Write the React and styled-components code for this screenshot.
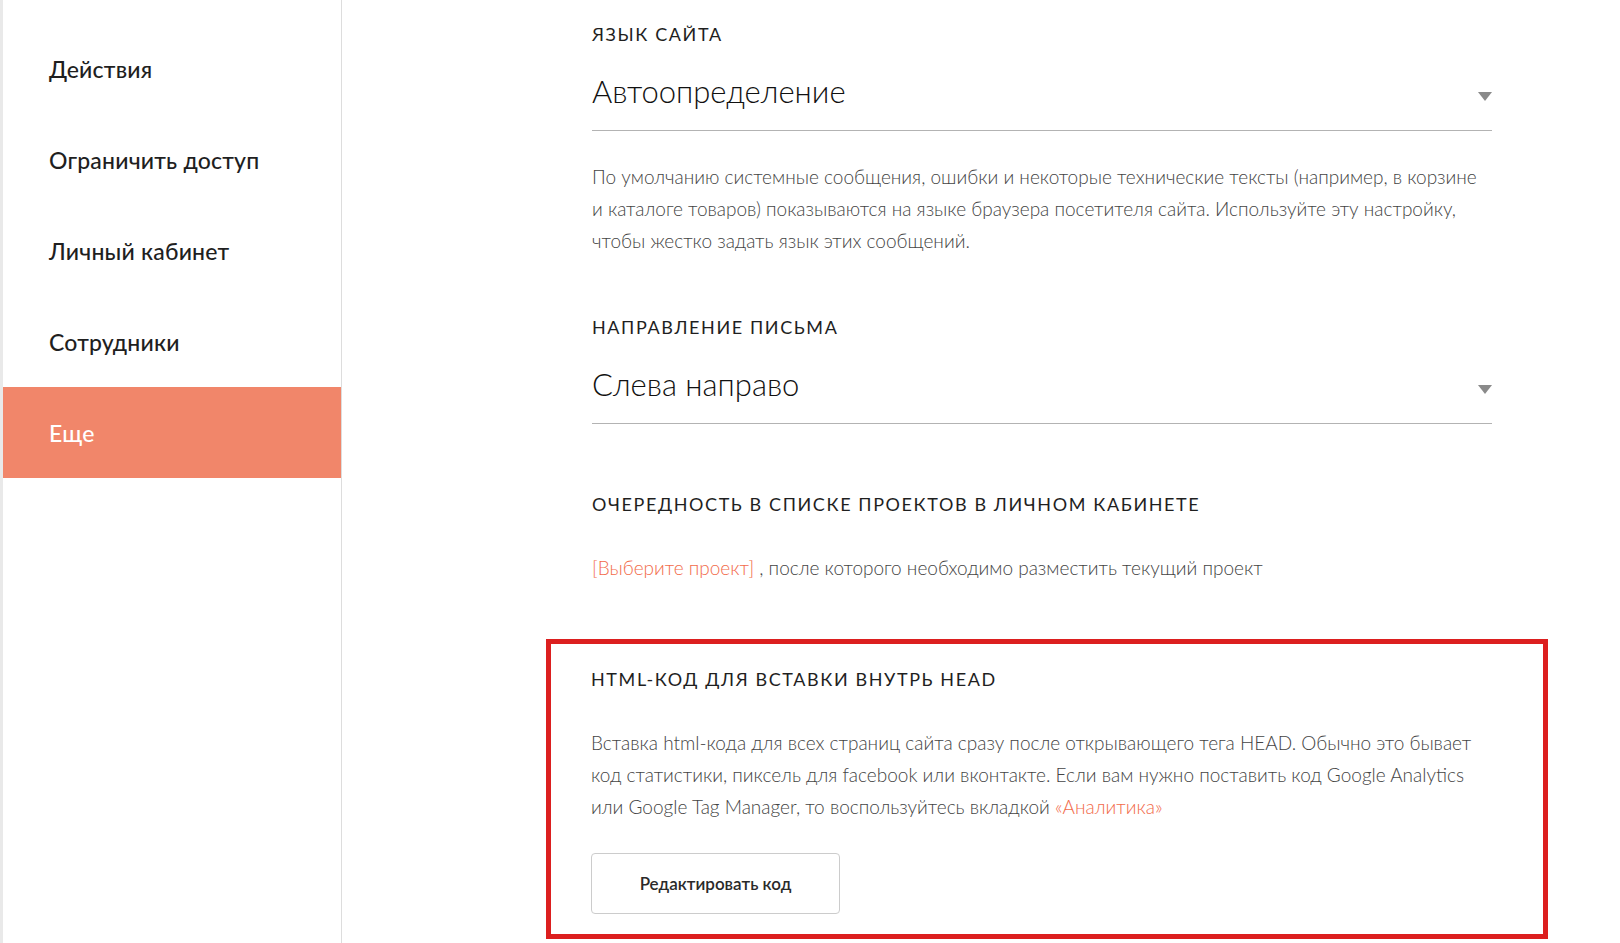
import React from 'react';
import styled, { createGlobalStyle } from 'styled-components';

const GlobalStyle = createGlobalStyle`
  html, body {
    margin: 0;
    padding: 0;
    background: #ffffff;
  }
  body {
    font-family: Lato, "Noto Sans", sans-serif;
    color: #222222;
  }
`;

const Page = styled.div`
  display: flex;
  min-height: 943px;
`;

const Sidebar = styled.nav`
  width: 338px;
  flex-shrink: 0;
  border-left: 3px solid #e9e9e9;
  border-right: 1px solid #dddddd;
  padding-top: 23px;
  box-sizing: content-box;
`;

const MenuItem = styled.div`
  height: 91px;
  display: flex;
  align-items: center;
  padding-left: 46px;
  font-size: 23px;
  font-weight: 500;
  letter-spacing: 0.2px;
  color: ${p => (p.$active ? '#ffffff' : '#1f1f1f')};
  background: ${p => (p.$active ? '#f1866a' : 'transparent')};
`;

const Main = styled.main`
  flex: 1;
  padding: 22px 0 0 250px;
`;

const Content = styled.div`
  width: 900px;
`;

const Label = styled.div`
  font-size: 18px;
  letter-spacing: 1.6px;
  text-transform: uppercase;
  color: #1f1f1f;
  line-height: 24px;
`;

const Select = styled.div`
  display: flex;
  align-items: center;
  justify-content: space-between;
  height: 70px;
  margin-top: 10px;
  border-bottom: 1px solid #b3b3b3;
  font-size: 31px;
  font-weight: 300;
  color: #111111;
  padding-bottom: 4px;
`;

const Arrow = styled.span`
  width: 0;
  height: 0;
  border-left: 7px solid transparent;
  border-right: 7px solid transparent;
  border-top: 9px solid #8a8a8a;
  margin-top: 10px;
`;

const Text = styled.p`
  margin: ${p => p.$margin || '0'};
  font-size: 19px;
  line-height: 32px;
  font-weight: 300;
  color: #444444;
`;

const Link = styled.span`
  color: #f26b4b;
`;

const Block = styled.section`
  margin-top: ${p => p.$top || '0'};
`;

const Highlight = styled.section`
  margin: 55px -56px 0 -46px;
  padding: 23px 51px 20px 40px;
  border: 5px solid #dc1f1f;
`;

const Button = styled.button`
  display: block;
  margin-top: 30px;
  width: 249px;
  height: 61px;
  border: 1px solid #cccccc;
  border-radius: 4px;
  background: #ffffff;
  font-family: Lato, "Noto Sans", sans-serif;
  font-size: 17px;
  font-weight: 600;
  color: #2a2a2a;
  cursor: pointer;
`;

const menu = ['Действия', 'Ограничить доступ', 'Личный кабинет', 'Сотрудники', 'Еще'];

export default function App() {
  return (
    <>
      <GlobalStyle />
      <Page>
        <Sidebar>
          {menu.map(item => (
            <MenuItem key={item} $active={item === 'Еще'}>{item}</MenuItem>
          ))}
        </Sidebar>
        <Main>
          <Content>
            <Block>
              <Label>Язык сайта</Label>
              <Select>
                Автоопределение
                <Arrow />
              </Select>
              <Text $margin="30px 0 0">
                По умолчанию системные сообщения, ошибки и некоторые технические тексты (например, в корзине<br />
                и каталоге товаров) показываются на языке браузера посетителя сайта. Используйте эту настройку,<br />
                чтобы жестко задать язык этих сообщений.
              </Text>
            </Block>
            <Block $top="58px">
              <Label>Направление письма</Label>
              <Select>
                Слева направо
                <Arrow />
              </Select>
            </Block>
            <Block $top="68px">
              <Label>Очередность в списке проектов в личном кабинете</Label>
              <Text $margin="36px 0 0">
                <Link>[Выберите проект]</Link> , после которого необходимо разместить текущий проект
              </Text>
            </Block>
            <Highlight>
              <Label>HTML-код для вставки внутрь HEAD</Label>
              <Text $margin="36px 0 0">
                Вставка html-кода для всех страниц сайта сразу после открывающего тега HEAD. Обычно это бывает<br />
                код статистики, пиксель для facebook или вконтакте. Если вам нужно поставить код Google Analytics<br />
                или Google Tag Manager, то воспользуйтесь вкладкой <Link>«Аналитика»</Link>
              </Text>
              <Button>Редактировать код</Button>
            </Highlight>
          </Content>
        </Main>
      </Page>
    </>
  );
}
